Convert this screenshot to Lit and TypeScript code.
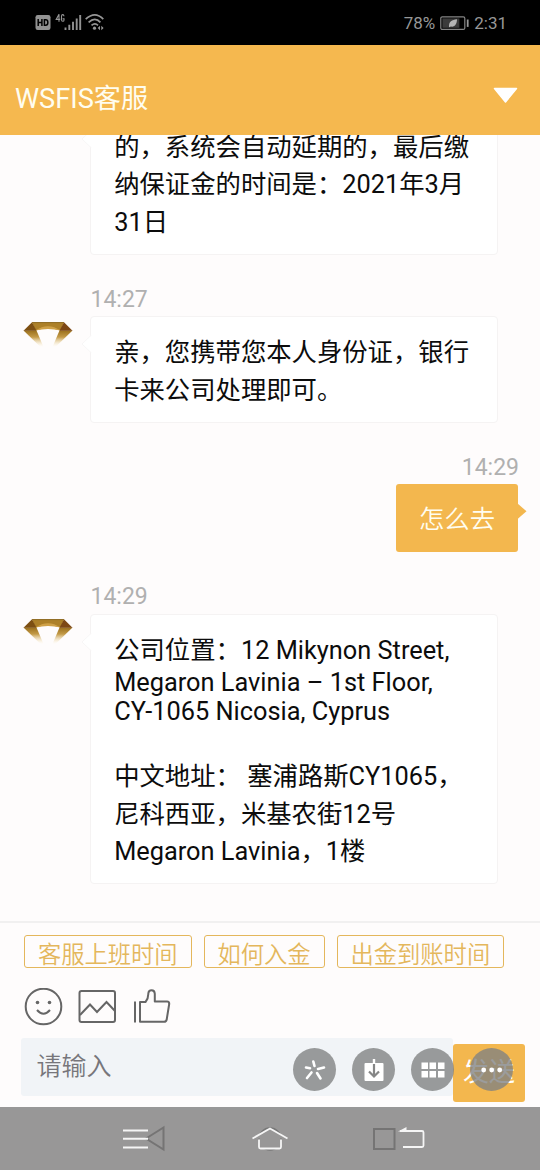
import { LitElement, html, css, svg } from "lit";
import { customElement, property } from "lit/decorators.js";

interface Line { text: string; kind: string }
interface Message { id: string; time: string; mine: boolean; lines: Line[] }

const cjk = (text: string): Line => ({ text, kind: "cjk" });

const messages: Message[] = [
  {
    id: "m1", time: "", mine: false,
    lines: [cjk("的，系统会自动延期的，最后缴"), cjk("纳保证金的时间是：2021年3月"), cjk("31日")],
  },
  { id: "m2", time: "14:27", mine: false, lines: [cjk("亲，您携带您本人身份证，银行"), cjk("卡来公司处理即可。")] },
  { id: "m3", time: "14:29", mine: true, lines: [cjk("怎么去")] },
  {
    id: "m4", time: "14:29", mine: false,
    lines: [
      { text: "公司位置：12 Mikynon Street,", kind: "lead" },
      { text: "Megaron Lavinia – 1st Floor,", kind: "latin" },
      { text: "CY-1065 Nicosia, Cyprus", kind: "latin" },
      { text: "", kind: "blank" },
      cjk("中文地址： 塞浦路斯CY1065，"),
      cjk("尼科西亚，米基农街12号"),
      cjk("Megaron Lavinia，1楼"),
    ],
  },
];

@customElement("status-bar")
class StatusBar extends LitElement {
  static styles = css`
    :host { display: flex; justify-content: space-between; align-items: center; height: 45px; padding: 1px 33px 0 35px; box-sizing: border-box; background: #000; color: #979797; font-size: 17px; }
    .side { display: flex; align-items: center; }
    svg { display: block; }
    .battery { margin: 0 5px 0 5px; }
  `;
  render() {
    return html`
      <div class="side">
        <svg width="70" height="20" viewBox="0 0 70 20">
          <rect x="0.5" y="2" width="15" height="15" rx="2.2" fill="#929292"/>
          <path d="M3.2 6v7M6.9 6v7M3.2 9.5h3.7M9.4 6.7v5.6h1.3q2.1 0 2.1-2.2v-1.2q0-2.2-2.1-2.2z" fill="none" stroke="#000" stroke-width="1.5"/>
          <path d="M24 8.7V1.3L21.2 6.4h4M29 3.2q-.2-1.6-1.3-1.6t-1.2 1.7v3.2q0 1.8 1.3 1.8 1.2 0 1.2-1.4v-1.2h-1.4" fill="none" stroke="#979797" stroke-width="1.1"/>
          <path d="M30.5 14.4v2.6M34.3 11.7v5.3M38 8.7v8.3M41.7 5.5v11.5M45.2 2v15" stroke="#929292" stroke-width="1.9"/>
          <g fill="none" stroke="#979797" stroke-width="1.7">
            <path d="M50.7 6.2Q60-2.4 68.3 6.2"/><path d="M53.6 9.4Q60 3.4 65.4 9.4"/><path d="M56.5 12.4Q60 9.4 63 12.4"/>
          </g>
          <circle cx="59.5" cy="15.2" r="1.6" fill="#979797"/>
          <path d="M65 12.8v4.4l-2.3-2.2zM66.3 12.8v4.4l2.3-2.2z" fill="#979797"/>
        </svg>
      </div>
      <div class="side">
        <span>78%</span>
        <svg class="battery" width="29" height="15" viewBox="0 0 29 15">
          <rect x="0.8" y="0.8" width="24" height="12.6" rx="1.5" fill="none" stroke="#858585" stroke-width="1.2"/>
          <rect x="2.4" y="2.4" width="17" height="9.4" fill="#3b3b3b"/>
          <path d="M9 11.2C8.6 5.4 12 4 17 3.3c0 5-2.3 8-6.2 7.2z" fill="#b5b5b5"/>
          <path d="M27.7 3.5v7.4" stroke="#979797" stroke-width="1.8"/>
        </svg>
        <span>2:31</span>
      </div>`;
  }
}

@customElement("chat-message")
class ChatMessage extends LitElement {
  @property({ attribute: false }) message!: Message;
  static styles = css`
    :host { display: block; }
    .time { height: 30px; line-height: 30px; font-size: 23px; color: #b0b0b0; margin-left: 90.5px; margin-bottom: 1.5px; }
    .row { display: flex; align-items: flex-start; }
    .avatar { width: 50px; height: 28px; margin: 5.5px 17px 0 23px; flex: none; display: block; }
    .bubble { position: relative; box-sizing: border-box; width: 408px; border: 1.5px solid #f5f3f3; border-radius: 4px; background: #fff; padding: 17px 22.5px 12.5px 23.2px; color: #0c0c0c; font-size: 25.35px; white-space: nowrap; }
    .arrow { position: absolute; left: -10px; top: 18px; display: block; }
    .cjk { height: 37.5px; line-height: 37.5px; }
    .lead { height: 36px; line-height: 37px; }
    .latin { height: 29px; line-height: 29px; }
    .blank { height: 32.5px; }
    .mine .time { text-align: right; margin: 0 21px 1.5px 0; }
    .mine .row { justify-content: flex-end; padding-right: 22px; }
    .mine .bubble { width: 122px; height: 68px; border: 0; border-radius: 3px; background: #f3b74e; color: #fffdf0; font-weight: 350; padding: 17px 0 0; text-align: center; }
    .mine .arrow { left: auto; right: -9px; top: 19px; }
  `;
  render() {
    const m = this.message;
    const avatar = m.mine ? "" : m.time ? html`
      <svg class="avatar" viewBox="0 0 50 28">
        <defs>
          <linearGradient id="fade" x1="0" y1="0" x2="0" y2="1">
            <stop offset="0" stop-color="#9a6f1c"/><stop offset=".4" stop-color="#c49b48"/><stop offset="1" stop-color="#fff3cf" stop-opacity="0"/>
          </linearGradient>
        </defs>
        <path d="M.5 8.500h13L20.500 25h-3z" fill="url(#fade)"/><path d="M49.500 8.500h-13L29.500 25h3z" fill="url(#fade)"/>
        <path d="M9 .3h32l-3.200 8.200Q25 4.500 12.300 8.500z" fill="#ad8028"/>
        <path d="M12.500 8.500Q25 0 37.500 8.500Q25 5.500 12.500 8.500z" fill="#cfa148"/>
        <path d="M9 .3 13.500 8.700H.5z" fill="#7d4f12"/><path d="M41 .3 36.500 8.700h13z" fill="#7d4714"/>
        <path d="M9 .6h32" stroke="#8e6920"/>
      </svg>` : html`<div class="avatar"></div>`;
    const arrow = m.mine
      ? html`<svg class="arrow" width="10" height="17"><path d="M0 0 9.500 8.300 0 16.500z" fill="#f3b74e"/></svg>`
      : html`<svg class="arrow" width="11" height="18"><path d="M10.500 0 1 9l9.500 9" fill="#fff" stroke="#f7f6f6"/></svg>`;
    return html`
      <div class=${m.mine ? "mine" : "theirs"}>
        ${m.time ? html`<div class="time">${m.time}</div>` : ""}
        <div class="row">${avatar}
          <div class="bubble">${arrow}${m.lines.map(l => html`<div class=${l.kind}>${l.text}</div>`)}</div>
        </div>
      </div>`;
  }
}

@customElement("nav-bar")
class NavBar extends LitElement {
  static styles = css`
    :host { display: flex; align-items: center; justify-content: space-between; height: 63px; box-sizing: border-box; padding: 0 114px 1px 122px; background: #989797; }
    svg { display: block; }
  `;
  render() {
    return html`
      <svg width="46" height="30" viewBox="0 0 46 30" fill="none">
        <path d="M24 15.500 41.500 4.500v22z" stroke="#757474" stroke-width="2"/>
        <path d="M1 7.500h25M1 15.800h25M1 24.500h25" stroke="#f5f5f5" stroke-width="2"/>
      </svg>
      <svg width="38" height="30" viewBox="0 0 38 30" fill="none">
        <circle cx="19" cy="16" r="11" stroke="#777" stroke-width="1.500"/>
        <path d="M1.500 15.500 19 5.500l17.500 10M8 16.500v7.500q0 1.500 1.500 1.500h19q1.500 0 1.500-1.500v-7.500" fill="#989797" stroke="#f5f5f5" stroke-width="1.800"/>
      </svg>
      <svg width="54" height="30" viewBox="0 0 54 30" fill="none">
        <rect x="2" y="6" width="20.500" height="20" stroke="#757474" stroke-width="2"/>
        <path d="M28 8h22q1.500 0 1.500 1.500v13q0 1.500-1.500 1.500H31" stroke="#f5f5f5" stroke-width="1.800"/>
        <path d="M26 8.500 34.500 4v4.500z" fill="#f5f5f5"/>
      </svg>`;
  }
}

const tools = [
  svg`<g stroke="#fff" stroke-width="2.600" stroke-linecap="round"><path d="M20.300 13.500 21.500 18M31 19.500l-6 1.500M13 19.500l4 .8M18.500 24.500l-4.500 5.500M24 25l3.500 5.500"/></g>`,
  svg`<rect x="12.500" y="15" width="19" height="18" rx="1" fill="#fff"/><path d="M22 11v5" stroke="#fff" stroke-width="2.400"/><path d="M22 16v12.500M17 23.500l5 5 5-5" fill="none" stroke="#858686" stroke-width="2.200"/>`,
  svg`<path d="M10.500 14.500h6.500v6.500h-6.500zM18.500 14.500h6.500v6.500h-6.500zM27 14.500h6.500v6.500H27zM10.500 23h6.500v6.500h-6.500zM18.500 23h6.500v6.500h-6.500zM27 23h6.500v6.500H27z" fill="#fff"/>`,
  svg`<g fill="#fff"><circle cx="13.700" cy="22" r="2.400"/><circle cx="21.700" cy="22" r="2.400"/><circle cx="29.700" cy="22" r="2.400"/></g>`,
];

@customElement("app-root")
class AppRoot extends LitElement {
  static styles = css`
    :host { display: flex; flex-direction: column; width: 540px; height: 1170px; overflow: hidden; position: relative; background: #fefcfc; font-family: Roboto, "Noto Sans CJK SC", sans-serif; }
    status-bar, nav-bar, .header, .composer { flex: none; }
    .header { display: flex; align-items: center; justify-content: space-between; height: 90px; box-sizing: border-box; padding: 18px 22px 0 15px; background: #f5b84f; color: #fffdf0; font-size: 27.2px; line-height: 36px; }
    .caret { display: block; margin-top: -8px; }
    .chat { flex: none; height: 786px; overflow: hidden; display: flex; flex-direction: column; justify-content: flex-end; gap: 30px; padding-bottom: 37px; box-sizing: border-box; }
    .composer { height: 186px; box-sizing: border-box; border-top: 2px solid #f1f0f0; padding-top: 12px; }
    .quick { display: flex; gap: 12px; padding-left: 24px; }
    .chip { box-sizing: border-box; height: 33px; border: 1.500px solid #e4b75c; border-radius: 3px; color: #e4b75c; font-size: 23.300px; font-weight: 350; line-height: 39px; padding: 0 12.900px; white-space: nowrap; }
    .icons { display: flex; gap: 15px; padding: 20px 0 0 24px; }
    .icons svg { display: block; }
    .entry { display: flex; align-items: flex-start; padding: 11px 15px 0 21px; }
    .input { width: 432px; height: 58px; box-sizing: border-box; background: #f1f4f7; padding-left: 15.500px; font-size: 25px; font-weight: 350; line-height: 58px; color: #77767b; border-radius: 3px; }
    .send { width: 72px; height: 58px; margin-top: 6px; border-radius: 3px; background: #f3b74e; color: #fff; font-size: 26px; line-height: 57px; text-align: center; }
    .tools { position: absolute; left: 293px; top: 1048px; display: flex; gap: 16px; }
    .tool { width: 43px; height: 43px; border-radius: 50%; background: rgba(128, 129, 129, .79); }
    .tool svg { display: block; }
  `;
  render() {
    return html`
      <status-bar></status-bar>
      <div class="header">
        <span>WSFIS客服</span>
        <svg class="caret" width="25" height="17"><path d="M1.500 1.500h22L12.500 15z" fill="#fff" stroke="#fff" stroke-width="1.500" stroke-linejoin="round"/></svg>
      </div>
      <div class="chat">${messages.map(m => html`<chat-message .message=${m}></chat-message>`)}</div>
      <div class="composer">
        <div class="quick">${["客服上班时间", "如何入金", "出金到账时间"].map(t => html`<div class="chip">${t}</div>`)}</div>
        <div class="icons">
          <svg width="39" height="39" fill="none" stroke="#666" stroke-width="2"><circle cx="19.500" cy="18.500" r="17.800"/><path d="M13 22q6.500 7.500 13 0"/><circle cx="13.500" cy="14.500" r="1.800" fill="#666" stroke="none"/><circle cx="25.500" cy="14.500" r="1.800" fill="#666" stroke="none"/></svg>
          <svg width="40" height="39" fill="none" stroke="#666" stroke-width="2"><rect x="1.500" y="3" width="35.500" height="31" rx="2"/><path d="M2 27 12 16.500 19 24 28.500 14l8.500 9"/></svg>
          <svg width="40" height="39" fill="none" stroke="#666" stroke-width="2" stroke-linejoin="round"><path d="M2 13.500v21M7 14h5.500q3-3.500 2.800-8.500.3-3.300 3.300-3.300t3.200 3.500V13.500h12.200q2.500 0 2.200 2.500l-2.500 15.500q-.4 2.300-2.600 2.300H7z"/></svg>
        </div>
        <div class="entry"><div class="input">请输入</div><div class="send">发送</div></div>
      </div>
      <nav-bar></nav-bar>
      <div class="tools">${tools.map(t => html`<div class="tool"><svg width="43" height="43">${t}</svg></div>`)}</div>`;
  }
}
